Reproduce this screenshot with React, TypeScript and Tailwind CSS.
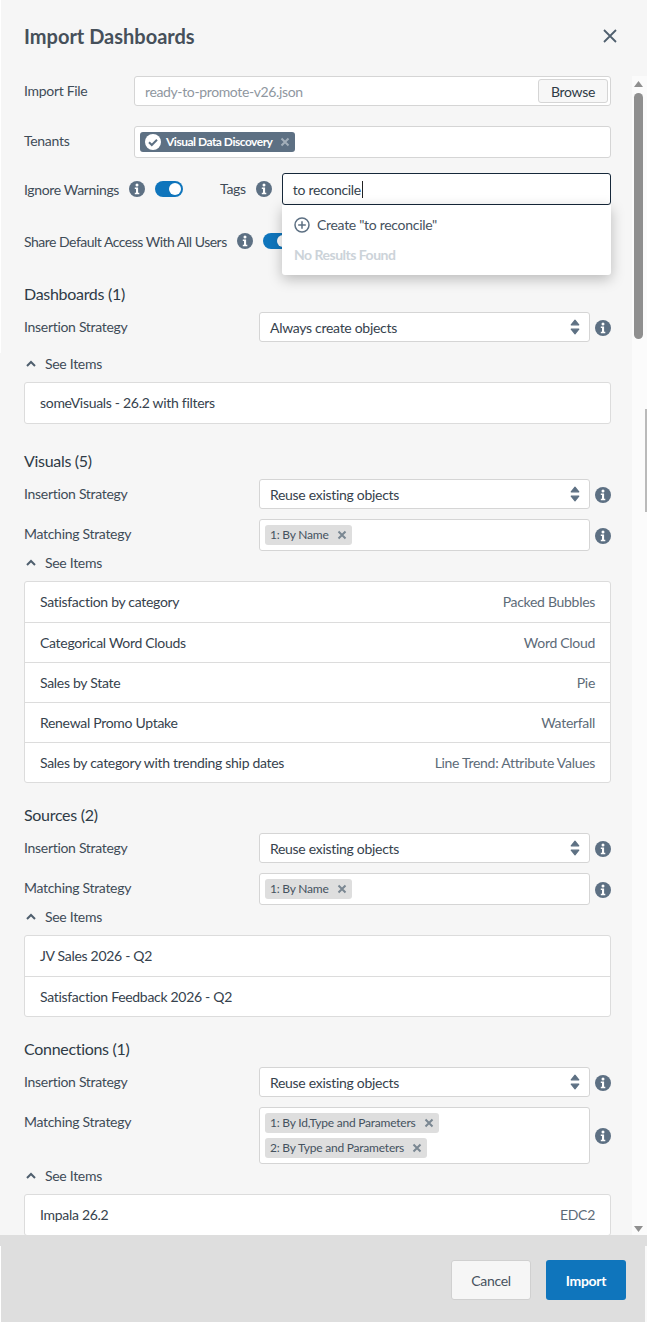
import React from "react";

const Info = () => (
  <svg width="16" height="16" viewBox="0 0 16 16" className="shrink-0">
    <circle cx="8" cy="8" r="8" fill="#5d7083" />
    <circle cx="8" cy="4" r="1.5" fill="#fff" />
    <path d="M5.8 6.6h3.3v5.2h1.2v1.5H5.8v-1.5h1.2V8.1H5.8z" fill="#fff" />
  </svg>
);

const X = ({ c = "#7a8792" }: { c?: string }) => (
  <svg width="10" height="10" viewBox="0 0 10 10" className="shrink-0">
    <path d="M1.5 1.5l7 7M8.5 1.5l-7 7" stroke={c} strokeWidth="2" />
  </svg>
);

const Chevron = () => (
  <svg width="10" height="7" viewBox="0 0 10 7" className="shrink-0">
    <path d="M1 6l4-4 4 4" stroke="#4f5f6e" strokeWidth="2" fill="none" />
  </svg>
);

const Updown = () => (
  <svg width="10" height="16" viewBox="0 0 10 16" className="shrink-0">
    <path d="M5 1.2l3.8 4.6h-7.6zM5 14.8l-3.8-4.6h7.6z" fill="#5d7083" stroke="#5d7083" strokeWidth="1.2" strokeLinejoin="round" />
  </svg>
);

const Chip = ({ t }: { t: string }) => (
  <span className="inline-flex items-center h-5 w-fit bg-[#dedede] rounded-[3px] pl-[5px] pr-[5px] gap-2 text-[12px] text-[#45525e] tracking-[-0.22px]">
    {t}
    <X />
  </span>
);

const Select = ({ v }: { v: string }) => (
  <div className="flex items-center justify-between w-[331px] h-[30px] border border-[#d5d5d5] rounded-[3px] bg-white pl-[10px] pr-[9px] text-[14px] text-[#36424d]">
    <span>{v}</span>
    <Updown />
  </div>
);

const Insertion = ({ v }: { v: string }) => (
  <div className="flex items-center h-[30px]">
    <div className="w-[235px] shrink-0 text-[14px] text-[#3f4c58] pb-[1px]">Insertion Strategy</div>
    <Select v={v} />
    <div className="ml-[5px] mt-[1px]"><Info /></div>
  </div>
);

const Matching = ({ chips }: { chips: string[] }) => (
  <div className="flex items-start">
    <div className="w-[235px] shrink-0 text-[14px] text-[#3f4c58] pt-[4px]">Matching Strategy</div>
    <div className="flex flex-col gap-[5px] w-[331px] border border-[#d5d5d5] rounded-[3px] bg-white px-[5px] py-[5px]">
      {chips.map((c) => <Chip key={c} t={c} />)}
    </div>
    <div className="ml-[5px] self-center mt-[1px]"><Info /></div>
  </div>
);

const SeeItems = () => (
  <div className="flex items-center h-5 pl-[2px] gap-[9px] text-[14px] text-[#3f4c58]">
    <Chevron />
    <span>See Items</span>
  </div>
);

const Items = ({ rows }: { rows: [string, string?][] }) => (
  <div className="border border-[#dcdcdc] rounded-[3px] bg-white">
    {rows.map(([a, b], i) => (
      <div key={a} className={`flex items-center justify-between h-10 px-[15px] pb-[1px] text-[14px] ${i ? "border-t border-[#dcdcdc]" : ""}`}>
        <span className="text-[#36424d]">{a}</span>
        {b && <span className="text-[#5d6b78]">{b}</span>}
      </div>
    ))}
  </div>
);

const Title = ({ t }: { t: string }) => <div className="text-[16px] leading-5 text-[#2f3b46]">{t}</div>;

export default function App() {
  return (
    <div className="relative w-[647px] h-[1322px] overflow-hidden bg-[#f6f6f6] text-[14px] font-['Lato','Open_Sans',sans-serif] tracking-[-0.3px]">
      <div className="flex items-center justify-between h-[71px] pl-6 pr-[30px]">
        <h1 className="text-[20px] font-bold text-[#46505a] tracking-normal">Import Dashboards</h1>
        <svg width="14" height="14" viewBox="0 0 14 14">
          <path d="M1 1l12 12M13 1L1 13" stroke="#4f5f6e" strokeWidth="1.8" />
        </svg>
      </div>

      <div className="relative h-[1164px] overflow-hidden">
        <div className="absolute right-0 top-[5px] bottom-0 w-[15px] bg-[#fbfbfb]">
          <div className="absolute left-[2px] top-[17px] w-[9px] h-[246px] rounded-[5px] bg-[#8f8f8f]" />
          <svg width="9" height="6" viewBox="0 0 9 6" className="absolute left-[2px] top-[5px]"><path d="M4.5 0L9 6H0z" fill="#8f8f8f" /></svg>
          <svg width="9" height="6" viewBox="0 0 9 6" className="absolute left-[2px] bottom-[3px]"><path d="M4.5 6L9 0H0z" fill="#8f8f8f" /></svg>
        </div>

        <div className="pl-6 pr-9 flex flex-col">
          <div className="flex items-center h-[30px] mt-[5px]">
            <div className="w-[110px] shrink-0 text-[#3f4c58] pb-[2px]">Import File</div>
            <div className="flex-1 flex items-center justify-between h-[30px] border border-[#d5d5d5] rounded-[3px] bg-white pl-[10px] pr-[2px]">
              <span className="text-[#8f979f] tracking-[-0.37px]">ready-to-promote-v26.json</span>
              <span className="flex items-center justify-center w-[70px] h-[24px] border border-[#d5d5d5] rounded-[3px] bg-[#f7f7f7] text-[#2f3b46]">Browse</span>
            </div>
          </div>

          <div className="flex items-center h-[32px] mt-[20px]">
            <div className="w-[110px] shrink-0 text-[#3f4c58] pb-[3px]">Tenants</div>
            <div className="flex-1 flex items-center h-[32px] border border-[#d5d5d5] rounded-[3px] bg-white pl-[5px]">
              <span className="inline-flex items-center h-5 bg-[#5d7083] rounded-[3px] pl-[5px] pr-[5px] text-[12px] font-bold text-white tracking-[-0.5px]">
                <svg width="16" height="16" viewBox="0 0 16 16" className="mr-[5px] shrink-0">
                  <circle cx="8" cy="8" r="8" fill="#fff" />
                  <path d="M4 8.2l2.8 2.8L12 5.8" stroke="#5d7083" strokeWidth="2" fill="none" />
                </svg>
                Visual Data Discovery
                <span className="ml-[8px]"><X c="#a3afba" /></span>
              </span>
            </div>
          </div>

          <div className="flex items-center h-[32px] mt-[15px]">
            <span className="text-[#3f4c58] tracking-[-0.36px]">Ignore Warnings</span>
            <span className="ml-[10px]"><Info /></span>
            <span className="ml-[10px] flex items-center justify-end w-[28px] h-4 rounded-full bg-[#0f75bc] pr-[2px]">
              <span className="w-3 h-3 rounded-full bg-white" />
            </span>
            <span className="ml-[37px] text-[#3f4c58] pb-[1px]">Tags</span>
            <span className="ml-[10px]"><Info /></span>
            <div className="ml-[10px] flex-1 flex items-center h-[32px] border border-[#16283a] rounded-[3px] bg-white pl-[10px] text-[#36424d]">
              to reconcile<span className="inline-block w-px h-[17px] bg-[#222] ml-[1px]" />
            </div>
          </div>

          <div className="flex items-center h-[20px] mt-[26px]">
            <span className="text-[#3f4c58] tracking-[-0.5px]">Share Default Access With All Users</span>
            <span className="ml-[10px]"><Info /></span>
            <span className="ml-[10px] flex items-center justify-end w-[28px] h-4 rounded-full bg-[#0f75bc] pr-[2px]">
              <span className="w-3 h-3 rounded-full bg-white" />
            </span>
          </div>

          <div className="mt-[33px]"><Title t="Dashboards (1)" /></div>
          <div className="mt-[8px]"><Insertion v="Always create objects" /></div>
          <div className="mt-[11px]"><SeeItems /></div>
          <div className="mt-[9px]"><Items rows={[["someVisuals - 26.2 with filters"]]} /></div>

          <div className="mt-[27px]"><Title t="Visuals (5)" /></div>
          <div className="mt-[8px]"><Insertion v="Reuse existing objects" /></div>
          <div className="mt-[10px]"><Matching chips={["1: By Name"]} /></div>
          <div className="mt-[1px]"><SeeItems /></div>
          <div className="mt-[9px]"><Items rows={[["Satisfaction by category", "Packed Bubbles"], ["Categorical Word Clouds", "Word Cloud"], ["Sales by State", "Pie"], ["Renewal Promo Uptake", "Waterfall"], ["Sales by category with trending ship dates", "Line Trend: Attribute Values"]]} /></div>

          <div className="mt-[22px]"><Title t="Sources (2)" /></div>
          <div className="mt-[8px]"><Insertion v="Reuse existing objects" /></div>
          <div className="mt-[10px]"><Matching chips={["1: By Name"]} /></div>
          <div className="mt-[1px]"><SeeItems /></div>
          <div className="mt-[9px]"><Items rows={[["JV Sales 2026 - Q2"], ["Satisfaction Feedback 2026 - Q2"]]} /></div>

          <div className="mt-[22px]"><Title t="Connections (1)" /></div>
          <div className="mt-[8px]"><Insertion v="Reuse existing objects" /></div>
          <div className="mt-[10px]"><Matching chips={["1: By Id,Type and Parameters", "2: By Type and Parameters"]} /></div>
          <div className="mt-[1px]"><SeeItems /></div>
          <div className="mt-[9px]"><Items rows={[["Impala 26.2", "EDC2"]]} /></div>
        </div>

        <div className="absolute left-[282px] top-[134px] w-[329px] h-[70px] bg-white rounded-b-[3px] shadow-[0_4px_14px_rgba(0,0,0,0.25)] text-[14px]">
          <div className="flex items-center gap-[7px] h-[39px] pl-[12px] text-[#46525e]">
            <svg width="16" height="16" viewBox="0 0 16 16" className="shrink-0">
              <circle cx="8" cy="8" r="7" stroke="#5d7083" strokeWidth="1.5" fill="none" />
              <path d="M8 4.2v7.6M4.2 8h7.6" stroke="#5d7083" strokeWidth="1.5" />
            </svg>
            Create "to reconcile"
          </div>
          <div className="pl-[12px] text-[#ccd3d9] font-bold tracking-[-0.5px]">No Results Found</div>
        </div>
      </div>

      <div className="flex items-center justify-end gap-[15px] h-[87px] bg-[#dedede] pr-[21px] pt-[3px]">
        <button className="w-[80px] h-[40px] border border-[#d0d0d0] rounded-[3px] bg-[#f6f6f6] text-[#46525e] text-[14px]">Cancel</button>
        <button className="w-[80px] h-[40px] rounded-[3px] bg-[#0f75bc] text-white font-bold text-[14px]">Import</button>
      </div>

      <div className="absolute left-[645px] top-[409px] w-[2px] h-[103px] bg-[#bababa]" />
      <div className="absolute left-[645px] top-[1246px] w-[2px] h-[76px] bg-[#fafafa]" />
      <div className="absolute left-0 top-0 w-px h-[353px] bg-white" />
      <div className="absolute left-0 top-[1246px] w-px h-[76px] bg-white" />
    </div>
  );
}
